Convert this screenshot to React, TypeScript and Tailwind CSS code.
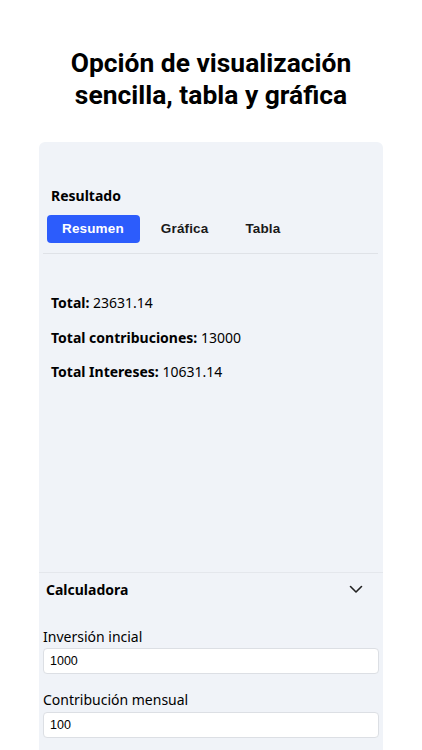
import React from "react";

const sans = { fontFamily: '"Noto Sans", "Open Sans", sans-serif' };

export default function App() {
  return (
    <div className="min-h-[750px] w-[422px] bg-white overflow-hidden">
      <h1
        className="pt-[47px] text-center text-[26.4px] leading-[32px] font-bold text-black"
        style={{ fontFamily: 'Roboto, "Liberation Sans", sans-serif' }}
      >
        Opción de visualización
        <br />
        sencilla, tabla y gráfica
      </h1>
      <div className="mt-[31px] ml-[39px] w-[344px] bg-[#f0f3f8] rounded-t-[6px]" style={sans}>
        <div className="h-[430px] px-[4px]">
          <div className="pt-[43px] pl-[8px] text-[14px] leading-[22px] font-bold text-black">Resultado</div>
          <div
            className="mt-[8px] flex gap-[6px] pl-[4px]"
            style={{ fontFamily: '"Liberation Sans", Arial, sans-serif' }}
          >
            <button className="h-[28px] pl-[15px] pr-[16px] rounded-[4px] bg-[#2c5cfc] text-white text-[13.5px] font-bold tracking-[0.15px]">
              Resumen
            </button>
            <button className="h-[28px] pl-[15px] pr-[16px] rounded-[4px] text-[#1a1a1a] text-[13.5px] font-bold tracking-[0.15px]">
              Gráfica
            </button>
            <button className="h-[28px] px-[15px] rounded-[4px] text-[#1a1a1a] text-[13.5px] font-bold tracking-[0.15px]">
              Tabla
            </button>
          </div>
          <div className="mt-[10px] mr-[1px] h-[1px] bg-[#dfe2e7]" />
          <div className="pt-[38px] pl-[8px] flex flex-col gap-[12.5px] text-[14px] leading-[22px] text-black">
            <div>
              <span className="font-bold">Total:</span> 23631.14
            </div>
            <div>
              <span className="font-bold">Total contribuciones:</span> 13000
            </div>
            <div>
              <span className="font-bold">Total Intereses:</span> 10631.14
            </div>
          </div>
        </div>
        <div className="border-t border-[#e4e7ec]">
          <div className="flex items-center justify-between pl-[7px] pr-[20px] pb-[3px] h-[36px]">
            <span className="text-[14px] leading-[22px] font-bold text-black">Calculadora</span>
            <svg width="14" height="9" viewBox="0 0 14 9" fill="none">
              <path d="M1.5 1.5 L7 7 L12.5 1.5" stroke="#222" strokeWidth="1.6" strokeLinecap="round" strokeLinejoin="round" />
            </svg>
          </div>
          <div className="px-[4px] pb-[20px]">
            <div className="mt-[18px] text-[14px] leading-[20px] text-black">Inversión incial</div>
            <div
              className="mt-[1px] h-[26px] bg-white border border-[#dcdfe4] rounded-[4px] flex items-center px-[6px] text-[12.5px] text-black"
              style={{ fontFamily: '"Liberation Sans", Arial, sans-serif' }}
            >
              1000
            </div>
            <div className="mt-[16px] text-[14px] leading-[20px] text-black">Contribución mensual</div>
            <div
              className="mt-[2px] h-[26px] bg-white border border-[#dcdfe4] rounded-[4px] flex items-center px-[6px] text-[12.5px] text-black"
              style={{ fontFamily: '"Liberation Sans", Arial, sans-serif' }}
            >
              100
            </div>
          </div>
        </div>
      </div>
    </div>
  );
}
